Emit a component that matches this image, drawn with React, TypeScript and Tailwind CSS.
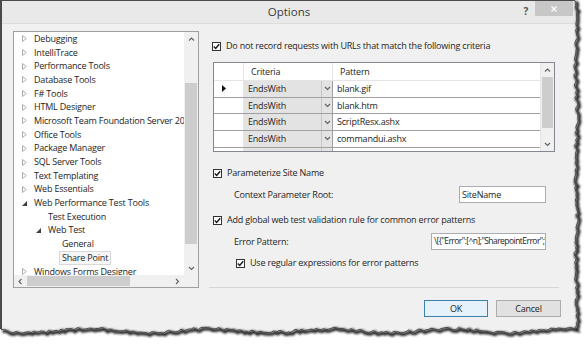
import React from 'react';

type Node = { label: string; level: number; state?: 'collapsed' | 'expanded'; selected?: boolean };

const tree: Node[] = [
  { label: 'Debugging', level: 0, state: 'collapsed' },
  { label: 'IntelliTrace', level: 0, state: 'collapsed' },
  { label: 'Performance Tools', level: 0, state: 'collapsed' },
  { label: 'Database Tools', level: 0, state: 'collapsed' },
  { label: 'F# Tools', level: 0, state: 'collapsed' },
  { label: 'HTML Designer', level: 0, state: 'collapsed' },
  { label: 'Microsoft Team Foundation Server 2013 Power Tools', level: 0, state: 'collapsed' },
  { label: 'Office Tools', level: 0, state: 'collapsed' },
  { label: 'Package Manager', level: 0, state: 'collapsed' },
  { label: 'SQL Server Tools', level: 0, state: 'collapsed' },
  { label: 'Text Templating', level: 0, state: 'collapsed' },
  { label: 'Web Essentials', level: 0, state: 'collapsed' },
  { label: 'Web Performance Test Tools', level: 0, state: 'expanded' },
  { label: 'Test Execution', level: 1 },
  { label: 'Web Test', level: 1, state: 'expanded' },
  { label: 'General', level: 2 },
  { label: 'Share Point', level: 2, selected: true },
  { label: 'Windows Forms Designer', level: 0, state: 'collapsed' },
];

const rows = ['blank.gif', 'blank.htm', 'ScriptResx.ashx', 'commandui.ashx'];

const Chevron = ({ dir, color = '#606060' }: { dir: 'up' | 'down' | 'left' | 'right'; color?: string }) => {
  const d = {
    up: 'M1 4.5 L3.5 2 L6 4.5',
    down: 'M1 2 L3.5 4.5 L6 2',
    left: 'M4.5 1 L2 3.5 L4.5 6',
    right: 'M2 1 L4.5 3.5 L2 6',
  }[dir];
  return (
    <svg width="7" height="7" viewBox="0 0 7 7">
      <path d={d} fill="none" stroke={color} strokeWidth="1.1" />
    </svg>
  );
};

const Check = () => (
  <span className="w-[9px] h-[9px] border border-[#333333] bg-white flex items-center justify-center shrink-0">
    <svg width="7" height="7" viewBox="0 0 7 7">
      <path d="M0.8 3.6 L2.7 5.5 L6.2 1.2" fill="none" stroke="#1a1a1a" strokeWidth="1.4" />
    </svg>
  </span>
);

const Arrow = ({ state }: { state?: Node['state'] }) => {
  if (state === 'collapsed')
    return (
      <svg width="5" height="7" viewBox="0 0 5 7">
        <path d="M0.5 0.5 L4.3 3.5 L0.5 6.5 Z" fill="none" stroke="#a6a6a6" strokeWidth="0.9" />
      </svg>
    );
  if (state === 'expanded')
    return (
      <svg width="5" height="5" viewBox="0 0 5 5">
        <path d="M5 0 L5 5 L0 5 Z" fill="#404040" />
      </svg>
    );
  return <span className="w-[5px]" />;
};

function edgePoints() {
  let s = 11;
  const r = () => {
    s = (s * 16807) % 2147483647;
    return s / 2147483647;
  };
  const pts: [number, number][] = [];
  for (let y = 0; y <= 328; y += 2.5) pts.push([574.5 + r() * 3 + Math.sin(y / 15) * 0.8, y]);
  for (let x = 576; x >= 0; x -= 2.5) pts.push([x, 329 + r() * 2.8 + Math.sin(x / 19) * 2]);
  return pts;
}

const TornEdge = () => {
  const pts = edgePoints();
  const line = pts.map((p) => `${p[0].toFixed(1)},${p[1].toFixed(1)}`).join(' ');
  const paper = `M0 0 L${pts[0][0].toFixed(1)} 0 L${line.split(' ').join(' L')} L0 ${pts[pts.length - 1][1].toFixed(1)} Z`;
  return (
    <svg className="absolute inset-0 pointer-events-none" width="587" height="347">
      <defs>
        <filter id="soft" x="-5%" y="-5%" width="110%" height="110%">
          <feGaussianBlur stdDeviation="1" />
        </filter>
      </defs>
      <path d={`M0 0 H587 V347 H0 Z ${paper}`} fill="#ffffff" fillRule="evenodd" />
      <polyline points={line} fill="none" stroke="#1a1a1a" strokeWidth="3" filter="url(#soft)" transform="translate(1.6,1.6)" />
      <polyline points={line} fill="none" stroke="#4a4a4a" strokeWidth="1" />
    </svg>
  );
};

const Tree = () => (
  <div className="mt-[7px] ml-[11px] w-[186px] h-[257px] border border-[#a0a0a0] bg-white flex flex-col">
    <div className="flex h-[243px]">
      <div className="flex-1 overflow-hidden">
        {tree.map((n) => (
          <div key={n.label} className="h-[13.7px] flex items-center whitespace-nowrap">
            <span className="flex items-center justify-center w-[5px]" style={{ marginLeft: 8 + n.level * 14 }}>
              <Arrow state={n.state} />
            </span>
            <span
              className={
                n.selected
                  ? 'ml-[4px] px-[2px] leading-[12px] border border-[#d9d9d9] bg-[#f6f6f6]'
                  : 'ml-[7px] leading-[12px]'
              }
            >
              {n.label}
            </span>
          </div>
        ))}
      </div>
      <div className="w-[14px] bg-[#f0f0f0] flex flex-col items-stretch">
        <div className="h-[14px] flex items-center justify-center">
          <Chevron dir="up" />
        </div>
        <div className="mt-[37px] h-[161px] mx-[1px] bg-[#cdcdcd]" />
        <div className="mt-auto h-[14px] flex items-center justify-center">
          <Chevron dir="down" />
        </div>
      </div>
    </div>
    <div className="flex h-[12px] bg-[#f0f0f0]">
      <div className="w-[13px] flex items-center justify-center">
        <Chevron dir="left" />
      </div>
      <div className="w-[103px] my-[1px] bg-[#cdcdcd]" />
      <div className="ml-auto w-[13px] flex items-center justify-center">
        <Chevron dir="right" />
      </div>
      <div className="w-[14px]" />
    </div>
  </div>
);

const Grid = () => (
  <div className="mt-[10px] ml-[4px] w-[342px] h-[90px] border border-[#828790] bg-white flex">
    <div className="flex-1 flex flex-col overflow-hidden">
      <div className="h-[18px] flex shrink-0 border-b border-[#e5e5e5] bg-white">
        <div className="w-[30px] border-r border-[#e5e5e5]" />
        <div className="w-[89px] pl-[7px] flex items-center border-r border-[#e5e5e5]">Criteria</div>
        <div className="flex-1 pl-[7px] flex items-center">Pattern</div>
      </div>
      {[...rows, ''].map((p, i) => (
        <div key={i} className="h-[16.7px] flex shrink-0 border-b border-[#a0a0a0]">
          <div className="w-[30px] border-r border-[#e5e5e5] bg-white flex items-center pl-[8px]">
            {i === 0 && (
              <svg width="4" height="7" viewBox="0 0 4 7">
                <path d="M0 0 L4 3.5 L0 7 Z" fill="#111" />
              </svg>
            )}
          </div>
          <div className="w-[89px] flex bg-[#e3e3e3] border-r border-[#a0a0a0]">
            <div className="flex-1 pl-[4px] flex items-center border-r border-[#c8c8c8]">{p && 'EndsWith'}</div>
            <div className="w-[10px] flex items-center justify-center">{p && <Chevron dir="down" />}</div>
          </div>
          <div className="flex-1 pl-[4px] flex items-center">{p}</div>
        </div>
      ))}
    </div>
    <div className="w-[14px] bg-[#f0f0f0] flex flex-col border-l border-[#e5e5e5]">
      <div className="h-[14px] flex items-center justify-center">
        <Chevron dir="up" />
      </div>
      <div className="h-[51px] mx-[1px] bg-[#cdcdcd]" />
      <div className="mt-auto h-[14px] flex items-center justify-center">
        <Chevron dir="down" />
      </div>
    </div>
  </div>
);

const CheckRow = ({ label, className }: { label: string; className: string }) => (
  <div className={`flex items-center h-[12px] ${className}`}>
    <Check />
    <span className="ml-[5px] whitespace-nowrap">{label}</span>
  </div>
);

export default function App() {
  return (
    <div className="relative w-[587px] h-[347px] bg-white overflow-hidden font-['Segoe_UI','Open_Sans',sans-serif] text-[9px] tracking-[-0.2px] text-[#1e1e1e]">
      <div className="w-[576px] h-[340px] bg-[#f0f0f0] border-l-2 border-t border-[#4a4a4a] flex flex-col">
        <div className="h-[23px] shrink-0 bg-[#e9e9e9] border-b border-[#dcdcdc] relative flex items-center justify-center">
          <span className="text-[11.5px] tracking-normal text-[#3c3c3c] -mt-[1px]">Options</span>
          <div className="absolute right-[3px] top-0 flex items-start">
            <span className="mt-[3px] mr-[7px] text-[10px] font-bold text-[#555555]">?</span>
            <div className="w-[38px] h-[15px] bg-[#c7c7c7] flex items-center justify-center">
              <svg width="6" height="6" viewBox="0 0 6 6">
                <path d="M0.5 0.5 L5.5 5.5 M5.5 0.5 L0.5 5.5" stroke="#ffffff" strokeWidth="1.2" />
              </svg>
            </div>
          </div>
        </div>
        <div className="flex">
          <Tree />
          <div className="ml-[10px] w-[353px] flex flex-col">
            <CheckRow label="Do not record requests with URLs that match the following criteria" className="mt-[16px] ml-[3px]" />
            <Grid />
            <CheckRow label="Parameterize Site Name" className="mt-[15px] ml-[4px]" />
            <div className="mt-[7px] h-[17px] flex items-center">
              <span className="ml-[25px]">Context Parameter Root:</span>
              <div className="ml-auto mr-[16px] w-[87px] h-[17px] border border-[#abadb3] bg-white flex items-center pl-[2px]">
                SiteName
              </div>
            </div>
            <CheckRow label="Add global web test validation rule for common error patterns" className="mt-[11px] ml-[4px]" />
            <div className="mt-[7px] h-[17px] flex items-center">
              <span className="ml-[25px]">Error Pattern:</span>
              <div className="ml-auto mr-[16px] w-[115px] h-[17px] border border-[#abadb3] bg-white flex items-center pl-[2px] overflow-hidden whitespace-nowrap text-[8.5px] tracking-[-0.55px]">
                {'\\[{"Error":[^n];"SharepointError";"H'}
              </div>
            </div>
            <CheckRow label="Use regular expressions for error patterns" className="mt-[7px] ml-[27px]" />
            <div className="mt-[18px] h-px bg-[#d5d5d5] w-[350px]" />
            <div className="mt-[12px] flex justify-end gap-[8px] mr-[1px]">
              <button className="w-[64px] h-[17px] border border-[#3c7fb1] bg-[#e5f1fb] flex items-center justify-center">OK</button>
              <button className="w-[65px] h-[17px] border border-[#adadad] bg-[#e1e1e1] flex items-center justify-center">Cancel</button>
            </div>
          </div>
        </div>
      </div>
      <TornEdge />
    </div>
  );
}
